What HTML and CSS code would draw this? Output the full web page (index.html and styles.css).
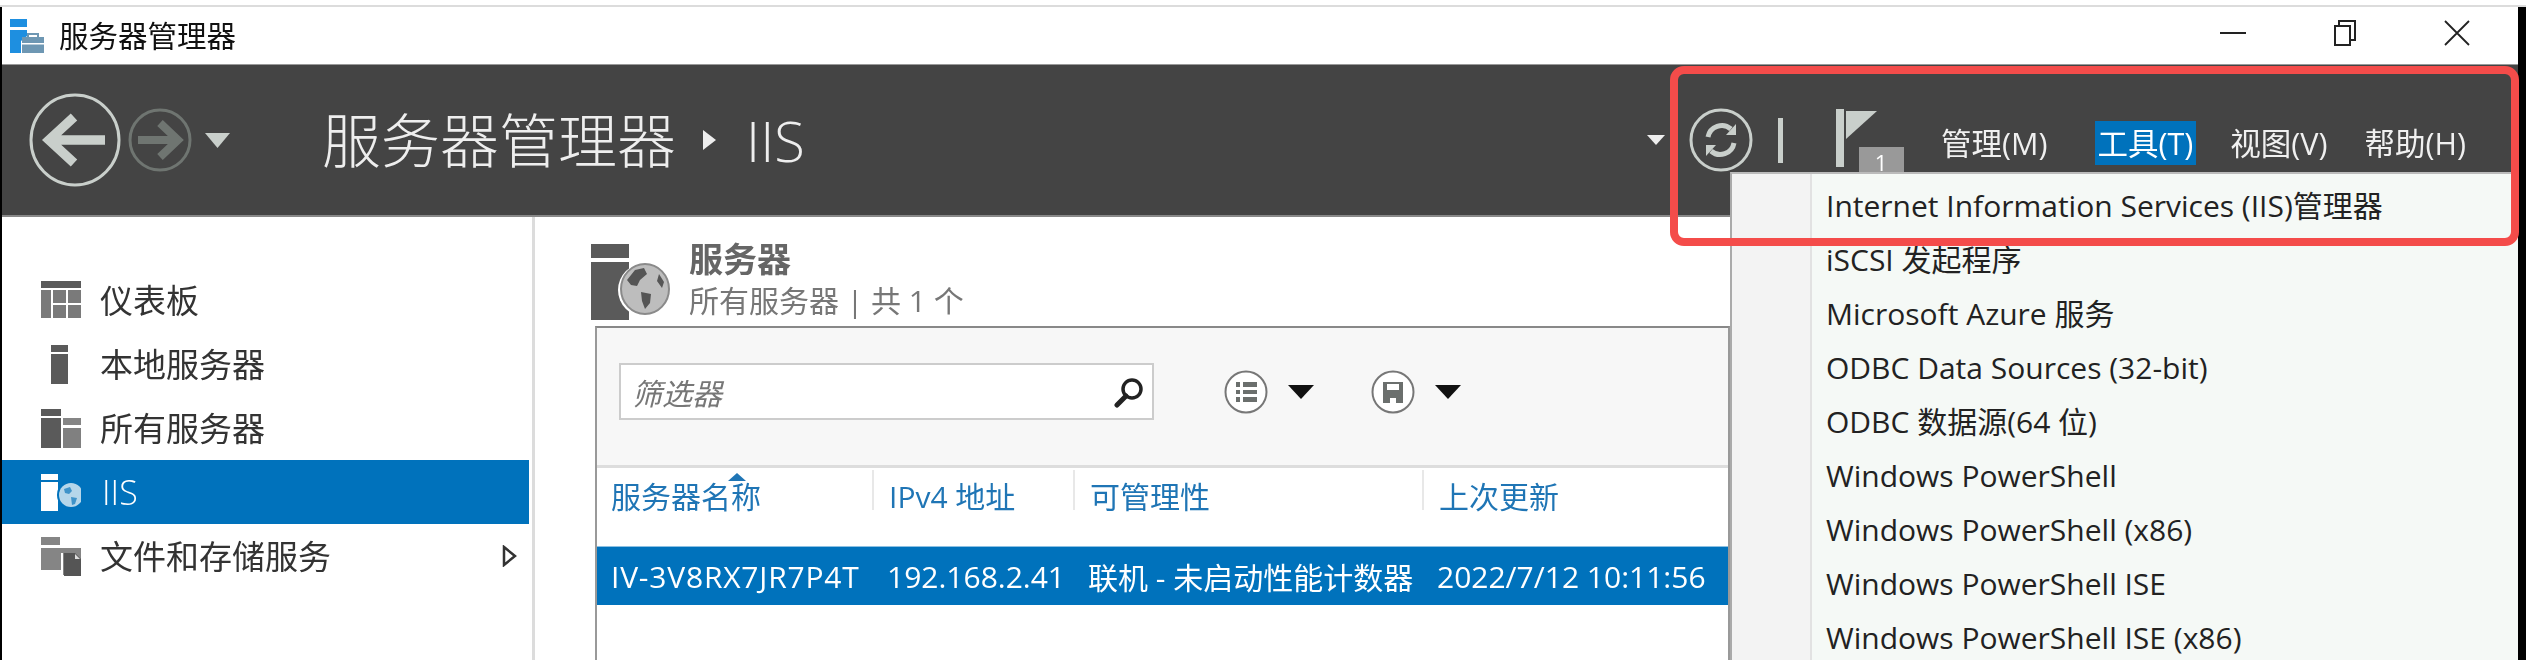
FILE: index.html
```html
<!DOCTYPE html>
<html lang="zh-CN">
<head>
<meta charset="utf-8">
<title>服务器管理器</title>
<link rel="stylesheet" href="styles.css">
</head>
<body>
<div class="window">
  <header class="titlebar">
    <svg class="app-icon" width="36" height="36" viewBox="0 0 36 36"><rect x="1" y="1" width="17" height="8" fill="#1e8fe0"/><path d="M1 12h17v6l-6 5v12H1z" fill="#1e8fe0"/><rect x="13" y="19" width="22" height="16" fill="#6e97b3"/><path d="M19 19v-3h10v3" fill="none" stroke="#6e97b3" stroke-width="2"/><rect x="13" y="25" width="22" height="1.5" fill="#fff"/></svg>
    <span class="app-name">服务器管理器</span>
    <div class="win-controls">
      <svg width="26" height="26" viewBox="0 0 26 26"><path d="M0 13h26" stroke="#222" stroke-width="2"/></svg>
      <svg width="26" height="26" viewBox="0 0 26 26"><path d="M7 6V1h16v19h-5" fill="none" stroke="#222" stroke-width="2"/><rect x="3" y="6" width="15" height="19" fill="#fff" stroke="#222" stroke-width="2"/></svg>
      <svg width="26" height="26" viewBox="0 0 26 26"><path d="M1 1l24 24M25 1L1 25" stroke="#222" stroke-width="1.8"/></svg>
    </div>
  </header>

  <nav class="navbar">
    <svg class="nav-back" width="92" height="94" viewBox="0 0 92 94"><ellipse cx="46" cy="47" rx="44" ry="45" fill="none" stroke="#c9cfcb" stroke-width="3"/><path d="M45 24L20 47l25 23M22 47h54" fill="none" stroke="#c9cfcb" stroke-width="9.500"/></svg>
    <svg class="nav-forward" width="64" height="64" viewBox="0 0 64 64"><circle cx="32" cy="32" r="30" fill="none" stroke="#6f7571" stroke-width="3"/><path d="M32 15l18 17-18 17M48 32H10" fill="none" stroke="#6f7571" stroke-width="8"/></svg>
    <svg class="nav-caret" width="25" height="15" viewBox="0 0 25 15"><path d="M0 0h25L12.500 15z" fill="#c9cfcb"/></svg>
    <span class="crumb">服务器管理器</span>
    <svg class="crumb-arrow" width="13" height="20" viewBox="0 0 13 20"><path d="M0 0l13 10L0 20z" fill="#eee"/></svg>
    <span class="crumb-leaf">IIS</span>
    <div class="nav-tools">
      <svg class="tool-caret" width="18" height="10" viewBox="0 0 18 10"><path d="M0 0h18L9 10z" fill="#eee"/></svg>
      <svg class="tool-refresh" width="64" height="64" viewBox="0 0 64 64"><circle cx="32" cy="32" r="30" fill="none" stroke="#c9cfcb" stroke-width="3"/><path d="M19 29a14 14 0 0 1 23-8M45 35a14 14 0 0 1-23 8" fill="none" stroke="#c9cfcb" stroke-width="5"/><path d="M37 27h10V16zM27 37H17v11z" fill="#c9cfcb"/></svg>
      <span class="tool-sep"></span>
      <svg class="tool-flag" width="70" height="66" viewBox="0 0 70 66"><rect x="2" y="1" width="8" height="58" fill="#c9cfcb"/><path d="M12 3h31L12 31z" fill="#c9cfcb"/><rect x="25" y="39" width="45" height="27" fill="#999"/><text x="47" y="63" class="flag-count">1</text></svg>
      <ul class="menubar">
        <li>管理(M)</li>
        <li class="is-open">工具(T)</li>
        <li>视图(V)</li>
        <li>帮助(H)</li>
      </ul>
    </div>
  </nav>

  <div class="main">
    <aside class="sidebar">
      <div class="side-item">
        <svg width="40" height="40" viewBox="0 0 40 40"><rect y="1" width="40" height="7" fill="#5a5a5a"/><rect y="10" width="10" height="28" fill="#7a7a7a"/><rect x="12" y="10" width="13" height="13" fill="#7a7a7a"/><rect x="27" y="10" width="13" height="13" fill="#7a7a7a"/><rect x="12" y="25" width="13" height="13" fill="#7a7a7a"/><rect x="27" y="25" width="13" height="13" fill="#7a7a7a"/></svg>
        <span>仪表板</span>
      </div>
      <div class="side-item">
        <svg width="40" height="40" viewBox="0 0 40 40"><rect x="10" y="1" width="17" height="7" fill="#5a5a5a"/><rect x="10" y="10" width="17" height="30" fill="#5a5a5a"/></svg>
        <span>本地服务器</span>
      </div>
      <div class="side-item">
        <svg width="40" height="40" viewBox="0 0 40 40"><rect y="1" width="20" height="7" fill="#5a5a5a"/><rect y="10" width="20" height="30" fill="#5a5a5a"/><rect x="22" y="10" width="18" height="7" fill="#858585"/><rect x="22" y="20" width="18" height="20" fill="#808080"/></svg>
        <span>所有服务器</span>
      </div>
      <div class="side-item is-active">
        <svg width="40" height="40" viewBox="0 0 40 40"><rect y="2" width="17" height="6" fill="#fff"/><rect y="10" width="17" height="29" fill="#fff"/><circle cx="30" cy="23" r="14" fill="#0072bc"/><circle cx="30" cy="23" r="12" fill="#b5d6ea"/><path d="M23 17l6-2 2 4-3 3-4-1zM30 25l6 1-2 6-3 1z" fill="#3f93c9"/></svg>
        <span class="side-latin">IIS</span>
      </div>
      <div class="side-item">
        <svg width="40" height="40" viewBox="0 0 40 40"><rect y="1" width="19" height="8" fill="#858585"/><path d="M0 12h40v27H22V17H0z" fill="#858585"/><rect y="12" width="20" height="22" fill="#858585"/><path d="M23 17h11l6 6v17H23z" fill="#555"/><path d="M34 18v5h5" fill="#ddd"/></svg>
        <span>文件和存储服务</span>
        <svg class="side-arrow" width="15" height="22" viewBox="0 0 15 22"><path d="M2 2l11 9-11 9z" fill="none" stroke="#333" stroke-width="2.500"/></svg>
      </div>
    </aside>

    <section class="content">
      <div class="page-head">
        <svg class="head-icon" width="80" height="76" viewBox="0 0 80 76"><rect width="38" height="14" fill="#5a5a5a"/><rect y="18" width="38" height="58" fill="#5a5a5a"/><circle cx="54" cy="46" r="27" fill="#fff"/><ellipse cx="54" cy="45" rx="24" ry="25" fill="#bdbdbd" stroke="#8a8a8a" stroke-width="2"/><path d="M36 36l8-10 9-2 3 6-7 6-3 6-6-1zM50 48l10 2-1 9-5 6-3-8zM68 30l5 8-2 6-5-7z" fill="#555"/></svg>
        <div class="head-text">
          <h1>服务器</h1>
          <p>所有服务器 | 共 1 个</p>
        </div>
      </div>

      <div class="panel">
        <div class="toolbar">
          <div class="filter">
            <span>筛选器</span>
            <svg width="32" height="32" viewBox="0 0 32 32"><circle cx="19" cy="13" r="9" fill="none" stroke="#222" stroke-width="3.500"/><path d="M13 20L4 29" stroke="#222" stroke-width="5" stroke-linecap="round"/></svg>
          </div>
          <svg class="tool-list" width="44" height="44" viewBox="0 0 44 44"><circle cx="22" cy="22" r="20.500" fill="#fff" stroke="#777" stroke-width="2"/><path d="M12 12h4v5h-4zM19 12h14v5H19zM12 20h4v4h-4zM19 20h14v4H19zM12 27h4v5h-4zM19 27h14v5H19z" fill="#6b6f6d"/></svg>
          <svg class="tool-drop" width="26" height="14" viewBox="0 0 26 14"><path d="M0 0h26L13 14z" fill="#111"/></svg>
          <svg class="tool-save" width="44" height="44" viewBox="0 0 44 44"><circle cx="22" cy="22" r="20.500" fill="#fff" stroke="#777" stroke-width="2"/><path d="M12 12h20v21h-7v-5h-6v5h-7zM16 14v6h12v-6z" fill="#6b6f6d" fill-rule="evenodd"/></svg>
          <svg class="tool-drop" width="26" height="14" viewBox="0 0 26 14"><path d="M0 0h26L13 14z" fill="#111"/></svg>
        </div>
        <div class="grid-head">
          <div class="col-head sorted">服务器名称</div>
          <div class="col-head">IPv4 地址</div>
          <div class="col-head">可管理性</div>
          <div class="col-head">上次更新</div>
        </div>
        <div class="grid-row">
          <div class="cell">IV-3V8RX7JR7P4T</div>
          <div class="cell">192.168.2.41</div>
          <div class="cell">联机 - 未启动性能计数器</div>
          <div class="cell">2022/7/12 10:11:56</div>
        </div>
      </div>
    </section>
  </div>

  <ul class="tools-menu">
    <li>Internet Information Services (IIS)管理器</li>
    <li>iSCSI 发起程序</li>
    <li>Microsoft Azure 服务</li>
    <li>ODBC Data Sources (32-bit)</li>
    <li>ODBC 数据源(64 位)</li>
    <li>Windows PowerShell</li>
    <li>Windows PowerShell (x86)</li>
    <li>Windows PowerShell ISE</li>
    <li>Windows PowerShell ISE (x86)</li>
  </ul>
  <div class="callout"></div>
</div>
</body>
</html>
```
FILE: styles.css
```css
* { box-sizing: border-box; }
html, body { margin: 0; padding: 0; background: #fff; }
body {
  width: 2526px;
  height: 660px;
  overflow: hidden;
  font-family: "Open Sans", "Noto Sans CJK SC", sans-serif;
  color: #222;
}
ul { list-style: none; margin: 0; padding: 0; }
h1, p { margin: 0; }
svg { display: block; flex: none; }

.window {
  position: relative;
  width: 2526px;
  height: 660px;
  padding-top: 7px;
  background: linear-gradient(#fff 0 5px, #dcdcdc 5px 7px, transparent 7px);
  overflow: hidden;
  filter: blur(0.5px);
}
.window::before, .window::after {
  content: "";
  position: absolute;
  top: 7px;
  bottom: 0;
  background: #000;
  z-index: 3;
}
.window::before { left: 0; width: 2px; }
.window::after { right: 0; width: 8px; }

.titlebar {
  display: flex;
  align-items: center;
  height: 57px;
  padding-left: 9px;
}
.app-name { margin-left: 14px; font-size: 29.500px; color: #111; line-height: 1; }
.win-controls {
  display: flex;
  gap: 86px;
  margin-left: auto;
  margin-right: 56px;
  padding-bottom: 6px;
}

.navbar {
  display: flex;
  align-items: center;
  height: 153px;
  padding-left: 29px;
  background: #444;
  border-top: 1px solid #999;
  border-bottom: 2px solid #888;
  color: #eee;
}
.nav-forward { margin-left: 7px; }
.nav-caret { margin-left: 13px; }
.crumb { margin-left: 92px; font-size: 59px; font-weight: 300; line-height: 1; }
.crumb-arrow { margin-left: 27px; }
.crumb-leaf { margin-left: 30px; font-size: 56px; font-weight: 300; line-height: 1; }

.nav-tools {
  display: flex;
  align-items: center;
  margin-left: auto;
  margin-right: 57px;
  height: 100%;
}
.tool-refresh { margin-left: 24px; }
.tool-sep { width: 5px; height: 45px; margin-left: 25px; background: #c9cfcb; }
.tool-flag { margin-left: 51px; margin-top: 2px; }
.flag-count { font-size: 22px; fill: #fff; text-anchor: middle; }
.menubar {
  display: flex;
  align-items: center;
  margin-left: 34px;
  margin-top: 6px;
  font-size: 30.500px;
  color: #f0f0f0;
}
.menubar li {
  padding: 0 3px;
  height: 44px;
  line-height: 44px;
  margin-right: 31px;
  white-space: nowrap;
}
.menubar li:first-child { margin-right: 44px; }
.menubar li:last-child { margin-right: 0; }
.menubar .is-open { background: #0072bc; color: #fff; }

.main { display: flex; height: 443px; }
.sidebar {
  width: 535px;
  padding: 51px 3px 0 0;
  border-right: 3px solid #dcdcdc;
  flex: none;
}
.side-item {
  display: flex;
  align-items: center;
  height: 64px;
  padding-left: 41px;
  font-size: 33px;
  color: #333;
}
.side-item span { margin-left: 19px; line-height: 1; }
.side-item .side-latin { margin-left: 21px; font-size: 34px; font-weight: 300; }
.side-item.is-active { background: #0072bc; color: #fff; }
.side-arrow { margin-left: auto; margin-right: 12px; }

.content { padding-left: 60px; width: 1195px; flex: none; }
.page-head {
  display: flex;
  height: 109px;
  padding-top: 27px;
  margin-left: -4px;
}
.head-text { margin-left: 18px; margin-top: -6px; }
.head-text h1 { font-size: 34px; font-weight: 700; color: #666; line-height: 42px; }
.head-text p { font-size: 30px; color: #777; line-height: 42px; white-space: pre; }

.panel {
  width: 1135px;
  height: 340px;
  background: #fff;
  border-top: 2px solid #888;
  border-left: 2px solid #999;
  border-right: 2px solid #999;
}
.toolbar {
  display: flex;
  align-items: flex-start;
  height: 140px;
  padding: 35px 0 0 22px;
  background: #f7f7f7;
  border-bottom: 3px solid #ddd;
}
.filter {
  display: flex;
  align-items: center;
  width: 535px;
  height: 57px;
  padding: 0 7px 0 11px;
  background: #fff;
  border: 2px solid #ccc;
}
.filter span { font-size: 30px; font-style: italic; color: #777; margin-right: auto; }
.tool-list { margin: 7px 0 0 70px; }
.tool-save { margin: 7px 0 0 57px; }
.tool-drop { margin: 22px 0 0 20px; }

.grid-head, .grid-row {
  display: grid;
  grid-template-columns: 275px 201px 349px 299px;
}
.grid-head { height: 78px; padding-top: 2px; }
.col-head {
  position: relative;
  height: 40px;
  padding: 9px 0 0 15px;
  border-left: 2px solid #e8e8e8;
  font-size: 30px;
  line-height: 36px;
  color: #1f75b5;
  white-space: nowrap;
}
.col-head:first-child { border-left: 0; padding-left: 14px; }
.sorted::before {
  content: "";
  position: absolute;
  left: 131px;
  top: 3px;
  border: 9px solid transparent;
  border-top: 0;
  border-bottom: 8px solid #1f75b5;
}
.grid-row {
  height: 59px;
  align-items: center;
  background: #0072bc;
  border-top: 1px solid #8cc0e2;
  color: #fff;
  font-size: 30px;
}
.cell { padding-left: 15px; white-space: nowrap; }
.cell:first-child { padding-left: 14px; letter-spacing: 0.8px; }

.tools-menu {
  position: absolute;
  left: 1730px;
  top: 172px;
  width: 788px;
  height: 488px;
  padding-top: 5px;
  background: linear-gradient(90deg, #f3f3f3 0 78px, #e2e2e2 78px 80px, #f5f9f6 80px);
  border-top: 2px solid #bbb;
  border-left: 2px solid #aaa;
  font-size: 30px;
  color: #222;
  z-index: 2;
}
.tools-menu li {
  height: 54px;
  line-height: 54px;
  padding-left: 94px;
  white-space: nowrap;
}

.callout {
  position: absolute;
  left: 1670px;
  top: 66px;
  width: 849px;
  height: 180px;
  border: 8px solid #f44c4a;
  border-radius: 14px;
  z-index: 4;
}
```
